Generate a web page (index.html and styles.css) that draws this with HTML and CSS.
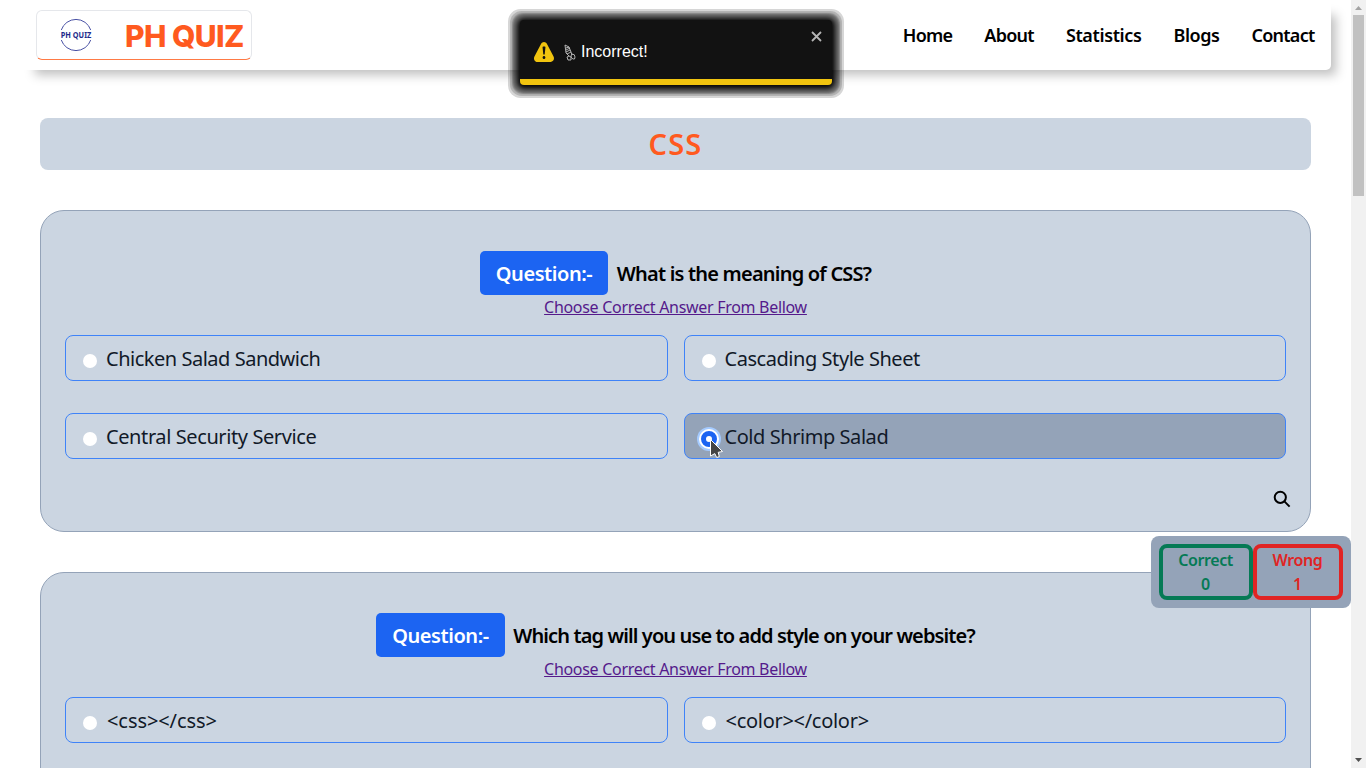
FILE: index.html
```html
<!DOCTYPE html>
<html lang="en">
<head>
<meta charset="utf-8">
<title>PH Quiz</title>
<link rel="stylesheet" href="styles.css">
</head>
<body>
<div class="page">
  <header class="navbar">
    <div class="brand">
      <svg class="brand-logo" width="34" height="34" viewBox="0 0 34 34">
        <path d="M2.300 12A15.500 15.500 0 0 1 31.700 12M2.300 22A15.500 15.500 0 0 0 31.700 22" fill="none" stroke="#4a52a5" stroke-width="1"/>
        <text class="logo-text" x="17" y="19.500" text-anchor="middle" textLength="30.500" lengthAdjust="spacingAndGlyphs">PH QUIZ</text>
      </svg>
      <span class="brand-name">PH QUIZ</span>
    </div>
    <nav class="nav-links"><a class="n1">Home</a><a class="n2">About</a><a class="n3">Statistics</a><a class="n4">Blogs</a><a class="n5">Contact</a></nav>
  </header>
  <main class="content">
    <h1 class="topic"><span>CSS</span></h1>
    <section class="card">
      <div class="question"><span class="tag">Question:-</span><span class="q1">What is the meaning of CSS?</span></div>
      <div class="hint"><span>Choose Correct Answer From Bellow</span></div>
      <div class="options">
        <label class="option"><i class="radio"></i><span class="o1">Chicken Salad Sandwich</span></label>
        <label class="option"><i class="radio"></i><span class="o2">Cascading Style Sheet</span></label>
        <label class="option"><i class="radio"></i><span class="o3">Central Security Service</span></label>
        <label class="option selected"><i class="radio checked"></i><span class="o4">Cold Shrimp Salad</span></label>
      </div>
      <svg class="search" width="18" height="18" viewBox="0 0 18 18" fill="none" stroke="#000" stroke-width="2"><circle cx="7.300" cy="7.300" r="5.600"/><path d="M11.400 11.400L16.600 16.600"/></svg>
    </section>
    <section class="card">
      <div class="question"><span class="tag">Question:-</span><span class="q2">Which tag will you use to add style on your website?</span></div>
      <div class="hint"><span>Choose Correct Answer From Bellow</span></div>
      <div class="options">
        <label class="option"><i class="radio"></i><span class="o5">&lt;css&gt;&lt;/css&gt;</span></label>
        <label class="option"><i class="radio"></i><span class="o6">&lt;color&gt;&lt;/color&gt;</span></label>
      </div>
    </section>
  </main>
</div>
<aside class="scrollbar">
  <svg width="15" height="15"><path d="M4 10h7L7.500 6z" fill="#a3a3a3"/></svg>
  <div class="thumb"></div>
  <svg class="down" width="15" height="15"><path d="M4 5h7L7.500 9z" fill="#505050"/></svg>
</aside>
<div class="score">
  <div class="score-box correct"><span>Correct</span><span>0</span></div>
  <div class="score-box wrong"><span>Wrong</span><span>1</span></div>
</div>
<div class="toast">
  <svg class="warning" width="20" height="20" viewBox="0 0 24 24" fill="#f1c40f"><path d="M23.320 17.191L15.438 2.184C14.728.833 13.416 0 11.996 0c-1.420 0-2.733.833-3.443 2.184L.533 17.448a4.744 4.744 0 000 4.368C1.243 23.167 2.555 24 3.975 24h16.050C22.220 24 24 22.044 24 19.632c0-.904-.251-1.746-.680-2.440zm-9.622 1.460c0 1.033-.724 1.823-1.698 1.823s-1.698-.790-1.698-1.822v-.043c0-1.028.724-1.822 1.698-1.822s1.698.790 1.698 1.822v.043zm.039-12.285l-.840 8.060c-.057.581-.408.943-.897.943-.490 0-.840-.367-.896-.942l-.840-8.065c-.057-.624.250-1.095.779-1.095h1.910c.528.005.840.476.784 1.100z"/></svg>
  <svg class="hand" width="12" height="17" viewBox="0 0 12 17" fill="none" stroke="#c4c4c4" stroke-width=".9"><path d="M1 1l1 8 3 3M1 1l4 2 2 5M2 4l3-1M2 6l4-2M2 8l4-2M3 10l4-2M5 12l-2 1 1 3 3 0 0-3-2-1M7 8l1 3M8 10q3 0 3 3t-2 2-2-3z"/></svg>
  <span class="toast-text">Incorrect!</span>
  <svg class="close" width="11" height="11" viewBox="0 0 11 11" stroke="#b5b5b5" stroke-width="1.800"><path d="M1 1L10 10M10 1L1 10"/></svg>
</div>
<svg class="cursor" width="16" height="22" viewBox="0 0 16 22"><path d="M1.500 1.500L13.500 13.500L9.200 14.300L10.300 18.600L7.700 19.500L5.800 15.600L1.500 18Z" fill="#444" stroke="#fff"/></svg>
</body>
</html>
```
FILE: styles.css
```css
* { box-sizing: border-box; }
body { margin: 0; height: 768px; overflow: hidden; display: flex; background: #fff; font-family: "Noto Sans", sans-serif; color: #000; }
.page { width: 1351px; height: 768px; overflow: hidden; }
.navbar { margin: 0 20px; height: 70px; padding: 0 16px; display: flex; justify-content: space-between; align-items: center; border-radius: 5px; box-shadow: 10px 10px 10px -5px rgba(0,0,0,.25); }
.brand { width: 216px; height: 50px; border: 1px solid #e5e7eb; border-bottom-color: #ff7a45; border-radius: 6px; display: flex; align-items: center; padding-left: 22px; }
.brand-logo { flex: none; overflow: visible; }
.logo-text { font: bold 9.5px "Noto Sans", sans-serif; fill: #1e2a8a; }
.brand-name { margin: 1px 0 0 32px; font: 800 30px/36px Inter, sans-serif; color: #ff5a1f; white-space: nowrap; letter-spacing: -0.55px; }
.nav-links { display: flex; gap: 32px; padding-right: 0.5px; font: 600 18px/28px "Noto Sans", sans-serif; }
.n1 { letter-spacing: -0.75px; }
.n2 { letter-spacing: -0.75px; }
.n3 { letter-spacing: -0.37px; }
.n4 { letter-spacing: -0.45px; }
.n5 { letter-spacing: -0.75px; }
.content { padding: 48px 40px 0; display: flex; flex-direction: column; }
.topic { margin: 0; height: 52px; border-radius: 8px; background: #cbd5e1; color: #ff5a1f; font-size: 29px; line-height: 51px; font-weight: 600; text-align: center; letter-spacing: 1.2px; }
.card { margin-top: 40px; height: 322px; flex: none; border: 1px solid #94a3b8; border-radius: 24px; background: #cbd5e1; padding: 40px 24px 0; display: flex; flex-direction: column; }
.question { display: flex; justify-content: center; align-items: center; gap: 8.5px; font-size: 20px; font-weight: 600; height: 44px; white-space: nowrap; }
.tag { background: #1c64f2; color: #fff; border-radius: 5px; padding: 0 16px; line-height: 46px; height: 44px; letter-spacing: -0.44px; }
.q1 { letter-spacing: -0.79px; line-height: 46px; padding-top: 2px; }
.q2 { letter-spacing: -0.88px; line-height: 46px; padding-top: 2px; }
.hint { text-align: center; font-size: 16px; line-height: 24px; height: 24px; color: #551a8b; text-decoration: underline; letter-spacing: -0.3px; }
.options { margin-top: 16px; display: grid; grid-template-columns: 1fr 1fr; gap: 32px 16px; }
.option { height: 46px; border: 1px solid #3f83f8; border-radius: 8px; display: flex; align-items: center; padding-left: 17px; gap: 9px; font-size: 20px; color: #111928; }
.option span { line-height: 46px; padding-top: 2px; }
.o1 { letter-spacing: -0.48px; }
.o2 { letter-spacing: -0.45px; }
.o3 { letter-spacing: -0.4px; }
.o4 { letter-spacing: -0.44px; }
.o5 { padding-left: 1px; letter-spacing: -0.08px; }
.o6 { padding-left: 1px; letter-spacing: -0.29px; }
.selected { background: #94a3b8; }
.radio { width: 14px; height: 14px; margin-top: 6px; border-radius: 50%; background: #fff; }
.checked { border: 5px solid #1c64f2; width: 16px; height: 16px; margin: 6px -1px 0 -1px; box-shadow: 0 0 0 2px #fff, 0 0 0 4px #a4cafe; }
.search { align-self: flex-end; margin: 31px -5px 0 0; }
.scrollbar { width: 15px; height: 768px; background: #f1f1f1; display: flex; flex-direction: column; align-items: center; }
.scrollbar svg { flex: none; }
.thumb { width: 11px; height: 181px; background: #c1c1c1; }
.down { margin-top: auto; }
.score { position: absolute; left: 1151px; top: 536px; width: 200px; height: 72px; padding: 8px; border-radius: 8px; background: #94a3b8; display: flex; font-size: 16px; line-height: 24px; font-weight: 600; letter-spacing: -0.4px; }
.score-box { height: 56px; border: 4px solid; border-radius: 8px; display: flex; flex-direction: column; align-items: center; padding-right: 1px; }
.correct { width: 94px; color: #057a55; }
.wrong { width: 90px; color: #e02424; }
.toast { position: absolute; left: 520px; top: 20px; width: 312px; height: 65px; background: #121212; border-bottom: 6px solid #f1c40f; border-radius: 4px; display: flex; align-items: center; padding: 4px 10px 0 14px; font: 16px "Liberation Sans", sans-serif; color: #fff; box-shadow: 0 1px 5px 3px rgba(0,0,0,.95), 0 1px 2px 7px rgba(0,0,0,.25), 0 1px 1px 8px rgba(0,0,0,.16), 0 1px 0 10px rgba(0,0,0,.16), 0 1px 0 12px rgba(0,0,0,.16); }
.hand { margin: 2px 5px 0 10px; }
.close { margin: -30px 0 0 auto; }
.cursor { position: absolute; left: 709px; top: 438px; }
```
